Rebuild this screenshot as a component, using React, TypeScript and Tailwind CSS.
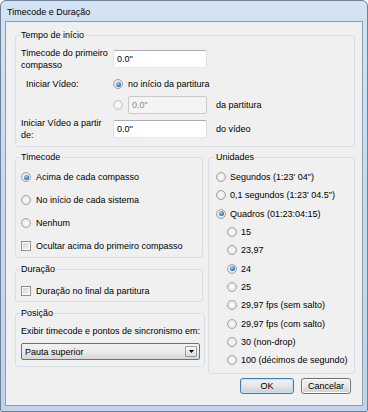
import React from "react";

function Radio({ checked = false, disabled = false }: { checked?: boolean; disabled?: boolean }) {
  return (
    <span
      className={
        "inline-flex w-[10px] h-[10px] shrink-0 rounded-full border items-center justify-center " +
        (disabled
          ? "border-[#c6c6c6] bg-[radial-gradient(circle_at_50%_50%,#ffffff_0%,#eeeeee_60%,#e2e2e2_100%)]"
          : "border-[#a3a3a3] bg-[radial-gradient(circle_at_50%_50%,#ffffff_0%,#ebebeb_55%,#d6d6d6_100%)]")
      }
    >
      {checked && (
        <span className="w-[5px] h-[5px] rounded-full bg-[radial-gradient(circle_at_40%_35%,#a9d8f8_0%,#3f86c8_50%,#1c4c86_100%)]" />
      )}
    </span>
  );
}

function Check() {
  return (
    <span className="inline-flex w-[10px] h-[10px] shrink-0 border border-[#8f8f8f] bg-white p-[1px]">
      <span className="block w-full h-full bg-gradient-to-br from-[#d4d4d4] to-[#f6f6f6]" />
    </span>
  );
}

function Field({ w, disabled = false }: { w: string; disabled?: boolean }) {
  return (
    <div
      className={
        "h-[18px] shrink-0 rounded-[2px] border flex items-center pl-[3px] " +
        w +
        (disabled
          ? " bg-[#f4f4f4] border-[#c9c9c9] text-[#8a8a8a]"
          : " bg-white border-[#abadb3] border-l-[#e2e3ea] border-r-[#dbdfe6] border-b-[#e3e9ef]")
      }
    >
      0.0"
    </div>
  );
}

function Group({
  title,
  className = "",
  children,
}: {
  title: string;
  className?: string;
  children: React.ReactNode;
}) {
  return (
    <fieldset className={"border border-[#d5dfe5] rounded-[3px] " + className}>
      <legend className="px-[1px] -ml-[1px] leading-[12px]">{title}</legend>
      {children}
    </fieldset>
  );
}

export default function App() {
  const sub = [
    { t: "15" },
    { t: "23,97" },
    { t: "24", c: true },
    { t: "25" },
    { t: "29,97 fps (sem salto)" },
    { t: "29,97 fps (com salto)" },
    { t: "30 (non-drop)" },
    { t: "100 (décimos de segundo)" },
  ];
  return (
    <div
      className="w-[368px] h-[412px] bg-white text-[9px] leading-[12px] text-black"
      style={{ fontFamily: '"Liberation Sans", Arial, sans-serif' }}
    >
      <div className="w-[368px] h-[412px] rounded-t-[6px] rounded-b-[2px] border border-[#6f8196] bg-gradient-to-b from-[#d3e3f4] via-[#c6d9ee] to-[#bfd4eb] flex flex-col px-[4px] pb-[5px]">
        <div className="h-[20px] shrink-0 flex items-center pl-[2px] pt-[1px]">Timecode e Duração</div>
        <div className="flex-1 border border-[#8c9db2] bg-[#f0f0f0] flex flex-col pl-[9px] pr-[7px]">
          {/* Tempo de início */}
          <Group title="Tempo de início" className="mt-[7px] pl-[5px] pt-[6px] pb-[5px]">
            <div className="flex items-center h-[24px]">
              <div className="w-[92px]">
                Timecode do primeiro
                <br />
                compasso
              </div>
              <Field w="w-[94px]" />
            </div>
            <div className="flex items-center h-[20px] mt-[3px]">
              <div className="w-[92px] pl-[5px]">Iniciar Vídeo:</div>
              <Radio checked />
              <span className="ml-[5px]">no início da partitura</span>
            </div>
            <div className="flex items-center h-[20px] mt-[1px]">
              <div className="w-[92px]" />
              <Radio disabled />
              <div className="ml-[5px]">
                <Field w="w-[79px]" disabled />
              </div>
              <span className="ml-[9px]">da partitura</span>
            </div>
            <div className="flex items-center h-[24px] mt-[2px]">
              <div className="w-[92px]">
                Iniciar Vídeo a partir
                <br />
                de:
              </div>
              <Field w="w-[94px]" />
              <span className="ml-[9px]">do vídeo</span>
            </div>
          </Group>

          <div className="flex gap-[5px] mt-[4px]">
            <div className="w-[188px] flex flex-col">
              <Group title="Timecode" className="pl-[5px] pt-[7px] pb-[4px]">
                <div className="flex flex-col gap-[9px]">
                  <div className="flex items-center h-[14px]">
                    <Radio checked />
                    <span className="ml-[5px]">Acima de cada compasso</span>
                  </div>
                  <div className="flex items-center h-[14px]">
                    <Radio />
                    <span className="ml-[5px]">No início de cada sistema</span>
                  </div>
                  <div className="flex items-center h-[14px]">
                    <Radio />
                    <span className="ml-[5px]">Nenhum</span>
                  </div>
                  <div className="flex items-center h-[14px]">
                    <Check />
                    <span className="ml-[5px]">Ocultar acima do primeiro compasso</span>
                  </div>
                </div>
              </Group>
              <Group title="Duração" className="mt-[5px] pl-[5px] pt-[9px] pb-[3px]">
                <div className="flex items-center h-[14px]">
                  <Check />
                  <span className="ml-[5px]">Duração no final da partitura</span>
                </div>
              </Group>
              <Group title="Posição" className="mt-[5px] pl-[5px] pr-[4px] pt-[5px] pb-[6px]">
                <div className="h-[14px] flex items-center whitespace-nowrap">
                  Exibir timecode e pontos de sincronismo em:
                </div>
                <div className="mt-[5px] h-[17px] rounded-[2px] border border-[#707070] bg-gradient-to-b from-[#f2f2f2] via-[#ebebeb] to-[#d6d6d6] flex items-center pl-[3px] pr-[2px]">
                  <span className="flex-1">Pauta superior</span>
                  <span className="w-[12px] h-[11px] rounded-[1px] border border-[#9a9a9a] bg-gradient-to-b from-[#fafafa] to-[#dcdcdc] flex items-center justify-center">
                    <svg width="5" height="3" viewBox="0 0 5 3">
                      <path d="M0 0 H5 L2.5 3 Z" fill="#000" />
                    </svg>
                  </span>
                </div>
              </Group>
            </div>
            <div className="w-[147px]">
              <Group title="Unidades" className="pl-[7px] pt-[5px] pb-[4px]">
                <div className="flex items-center h-[18.3px]">
                  <Radio />
                  <span className="ml-[4px]">Segundos (1:23' 04")</span>
                </div>
                <div className="flex items-center h-[18.3px]">
                  <Radio />
                  <span className="ml-[4px]">0,1 segundos (1:23' 04.5")</span>
                </div>
                <div className="flex items-center h-[18.3px]">
                  <Radio checked />
                  <span className="ml-[4px]">Quadros (01:23:04:15)</span>
                </div>
                {sub.map((s) => (
                  <div key={s.t} className="flex items-center h-[18.3px] pl-[11px]">
                    <Radio checked={!!s.c} />
                    <span className="ml-[4px]">{s.t}</span>
                  </div>
                ))}
              </Group>
            </div>
          </div>

          <div className="flex justify-end gap-[7px] mt-[4px] mr-[4px]">
            <div className="w-[54px] h-[16px] rounded-[3px] border border-[#3c7fb1] bg-gradient-to-b from-[#f2f2f2] via-[#e6e6e6] to-[#cfcfcf] shadow-[inset_0_0_0_1px_#bfe4f9] flex items-center justify-center">
              OK
            </div>
            <div className="w-[50px] h-[16px] rounded-[3px] border border-[#707070] bg-gradient-to-b from-[#f2f2f2] via-[#e6e6e6] to-[#cfcfcf] shadow-[inset_0_0_0_1px_#fbfbfb] flex items-center justify-center">
              Cancelar
            </div>
          </div>
        </div>
      </div>
    </div>
  );
}
